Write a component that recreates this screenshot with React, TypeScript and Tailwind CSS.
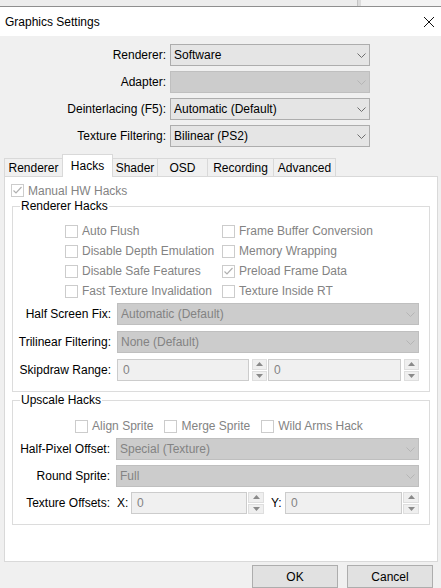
import React from "react";

const font = "font-['Liberation_Sans',Arial,sans-serif]";

const Chevron = ({ disabled }: { disabled?: boolean }) => (
  <svg width="9" height="5" viewBox="0 0 9 5" className="mr-[3px] shrink-0">
    <polyline
      points="0.5,0.5 4.5,4.5 8.5,0.5"
      fill="none"
      stroke={disabled ? "#b5b5b5" : "#6e6e6e"}
      strokeWidth="1"
    />
  </svg>
);

const Combo = ({ value, disabled }: { value?: string; disabled?: boolean }) => (
  <div
    className={
      disabled
        ? "h-[22px] flex items-center border border-[#bfbfbf] bg-[#cccccc] pl-[3px] text-[#838383]"
        : "h-[22px] flex items-center border border-[#adadad] bg-[#e5e5e5] pl-[3px] text-black"
    }
  >
    <span className="flex-1 truncate">{value}</span>
    <Chevron disabled={disabled} />
  </div>
);

const CheckBox = ({ label, checked }: { label: string; checked?: boolean }) => (
  <span className="flex items-center gap-[4px] h-[20px]">
    <span className="w-[13px] h-[13px] shrink-0 border border-[#cccccc] bg-white flex items-center justify-center">
      {checked && (
        <svg width="11" height="11" viewBox="0 0 11 11">
          <polyline points="1.5,5.5 4,8 9.5,2" fill="none" stroke="#b0b0b0" strokeWidth="1.2" />
        </svg>
      )}
    </span>
    <span className="text-[#838383] whitespace-nowrap">{label}</span>
  </span>
);

const SpinArrows = ({ className }: { className: string }) => (
  <div className={`flex flex-col gap-px h-[22px] ${className}`}>
    <span className="flex-1 flex items-center justify-center border border-[#dedede] bg-[#efefef]">
      <svg width="7" height="4" viewBox="0 0 7 4">
        <polygon points="3.5,0 7,4 0,4" fill="#8a8a8a" />
      </svg>
    </span>
    <span className="flex-1 flex items-center justify-center border border-[#dedede] bg-[#efefef]">
      <svg width="7" height="4" viewBox="0 0 7 4">
        <polygon points="0,0 7,0 3.5,4" fill="#8a8a8a" />
      </svg>
    </span>
  </div>
);

const SpinBox = ({ className }: { className: string }) => (
  <div className={`h-[22px] flex items-center border border-[#cccccc] bg-[#f0f0f0] pl-[5px] text-[#838383] ${className}`}>
    0
  </div>
);

const Label = ({ children }: { children: React.ReactNode }) => (
  <span className="h-[22px] flex items-center justify-end whitespace-nowrap text-black">{children}</span>
);

const tabs = [
  { name: "Renderer", w: "w-[59px]" },
  { name: "Hacks", w: "w-[51px]", active: true },
  { name: "Shader", w: "w-[46px]" },
  { name: "OSD", w: "w-[51px]" },
  { name: "Recording", w: "w-[67px]" },
  { name: "Advanced", w: "w-[63px]" },
];

export default function App() {
  return (
    <div className={`w-[441px] h-[588px] overflow-hidden bg-[#f0f0f0] text-[12px] leading-[16px] ${font}`}>
      {/* window behind */}
      <div className="flex h-[6px] bg-[#ededed]">
        <div className="w-[357px]" />
        <div className="w-px bg-[#c4c4c4]" />
        <div className="w-[3px] bg-[#dcdcdc]" />
        <div className="flex-1 bg-[#f3f3f3]" />
      </div>
      <div className="h-px bg-[#8f8f8f]" />

      {/* title bar */}
      <div className="h-[29px] bg-white flex items-center justify-between pl-[5px] pr-[7px]">
        <span className="text-black">Graphics Settings</span>
        <svg width="10" height="10" viewBox="0 0 10 10">
          <path d="M0 0 L10 10 M10 0 L0 10" stroke="#111" strokeWidth="1" />
        </svg>
      </div>

      {/* top form */}
      <div className="grid grid-cols-[162px_200px] gap-x-[4px] gap-y-[5px] pl-[4px] pt-[8px]">
        <Label>Renderer:</Label>
        <Combo value="Software" />
        <Label>Adapter:</Label>
        <Combo disabled />
        <Label>Deinterlacing (F5):</Label>
        <Combo value="Automatic (Default)" />
        <Label>Texture Filtering:</Label>
        <Combo value="Bilinear (PS2)" />
      </div>

      {/* tabs */}
      <div className="flex items-end h-[22px] mt-[7px] pl-[4px] relative z-10">
        {tabs.map((t, i) => (
          <div
            key={t.name}
            className={`${t.w} ${i > 0 ? "-ml-px" : ""} ${
              t.active
                ? "h-[23px] -mb-px bg-white z-10"
                : "h-[18px] bg-[#f0f0f0]"
            } border border-b-0 border-[#d9d9d9] flex items-center justify-center text-black`}
          >
            {t.name}
          </div>
        ))}
      </div>

      {/* tab pane */}
      <div className="ml-[4px] w-[434px] h-[386px] border border-[#d9d9d9] bg-white">
        <div className="ml-[6px] mt-[6px] h-[15px] flex items-center">
          <CheckBox label="Manual HW Hacks" checked />
        </div>

        <fieldset className="mx-[7px] border border-[#dcdcdc] pb-[10px]">
          <legend className="ml-[7px] px-[1px] leading-[16px] text-black">Renderer Hacks</legend>
          <div className="grid grid-cols-[157px_auto] pl-[52px] pt-[7px]">
            <CheckBox label="Auto Flush" />
            <CheckBox label="Frame Buffer Conversion" />
            <CheckBox label="Disable Depth Emulation" />
            <CheckBox label="Memory Wrapping" />
            <CheckBox label="Disable Safe Features" />
            <CheckBox label="Preload Frame Data" checked />
            <CheckBox label="Fast Texture Invalidation" />
            <CheckBox label="Texture Inside RT" />
          </div>
          <div className="grid grid-cols-[98px_302px] gap-x-[6px] gap-y-[6px] mt-[2px]">
            <Label>Half Screen Fix:</Label>
            <Combo value="Automatic (Default)" disabled />
            <Label>Trilinear Filtering:</Label>
            <Combo value="None (Default)" disabled />
            <Label>Skipdraw Range:</Label>
            <div className="flex">
              <SpinBox className="w-[132px]" />
              <SpinArrows className="w-[15px] ml-[3px]" />
              <SpinBox className="w-[133px] ml-px" />
              <SpinArrows className="w-[15px] ml-[3px]" />
            </div>
          </div>
        </fieldset>

        <fieldset className="mx-[7px] border border-[#dcdcdc] pb-[10px]">
          <legend className="ml-[7px] px-[1px] leading-[16px] text-black">Upscale Hacks</legend>
          <div className="flex justify-center gap-[11px] pt-[8px] pr-[4px]">
            <CheckBox label="Align Sprite" />
            <CheckBox label="Merge Sprite" />
            <CheckBox label="Wild Arms Hack" />
          </div>
          <div className="grid grid-cols-[97px_303px] gap-x-[6px] gap-y-[5px] mt-[2px]">
            <Label>Half-Pixel Offset:</Label>
            <Combo value="Special (Texture)" disabled />
            <Label>Round Sprite:</Label>
            <Combo value="Full" disabled />
            <Label>Texture Offsets:</Label>
            <div className="flex items-center">
              <span className="w-[15px] pl-px text-black">X:</span>
              <SpinBox className="w-[116px]" />
              <SpinArrows className="w-[16px] ml-px" />
              <span className="w-[21px] pl-[7px] text-black">Y:</span>
              <SpinBox className="w-[117px]" />
              <SpinArrows className="w-[16px] ml-px" />
            </div>
          </div>
        </fieldset>
      </div>

      {/* buttons */}
      <div className="flex justify-end gap-[9px] pr-[8px] mt-[3px]">
        <button className="w-[86px] h-[23px] border border-[#adadad] bg-[#e1e1e1] text-black">OK</button>
        <button className="w-[86px] h-[23px] border border-[#adadad] bg-[#e1e1e1] text-black">Cancel</button>
      </div>
    </div>
  );
}
